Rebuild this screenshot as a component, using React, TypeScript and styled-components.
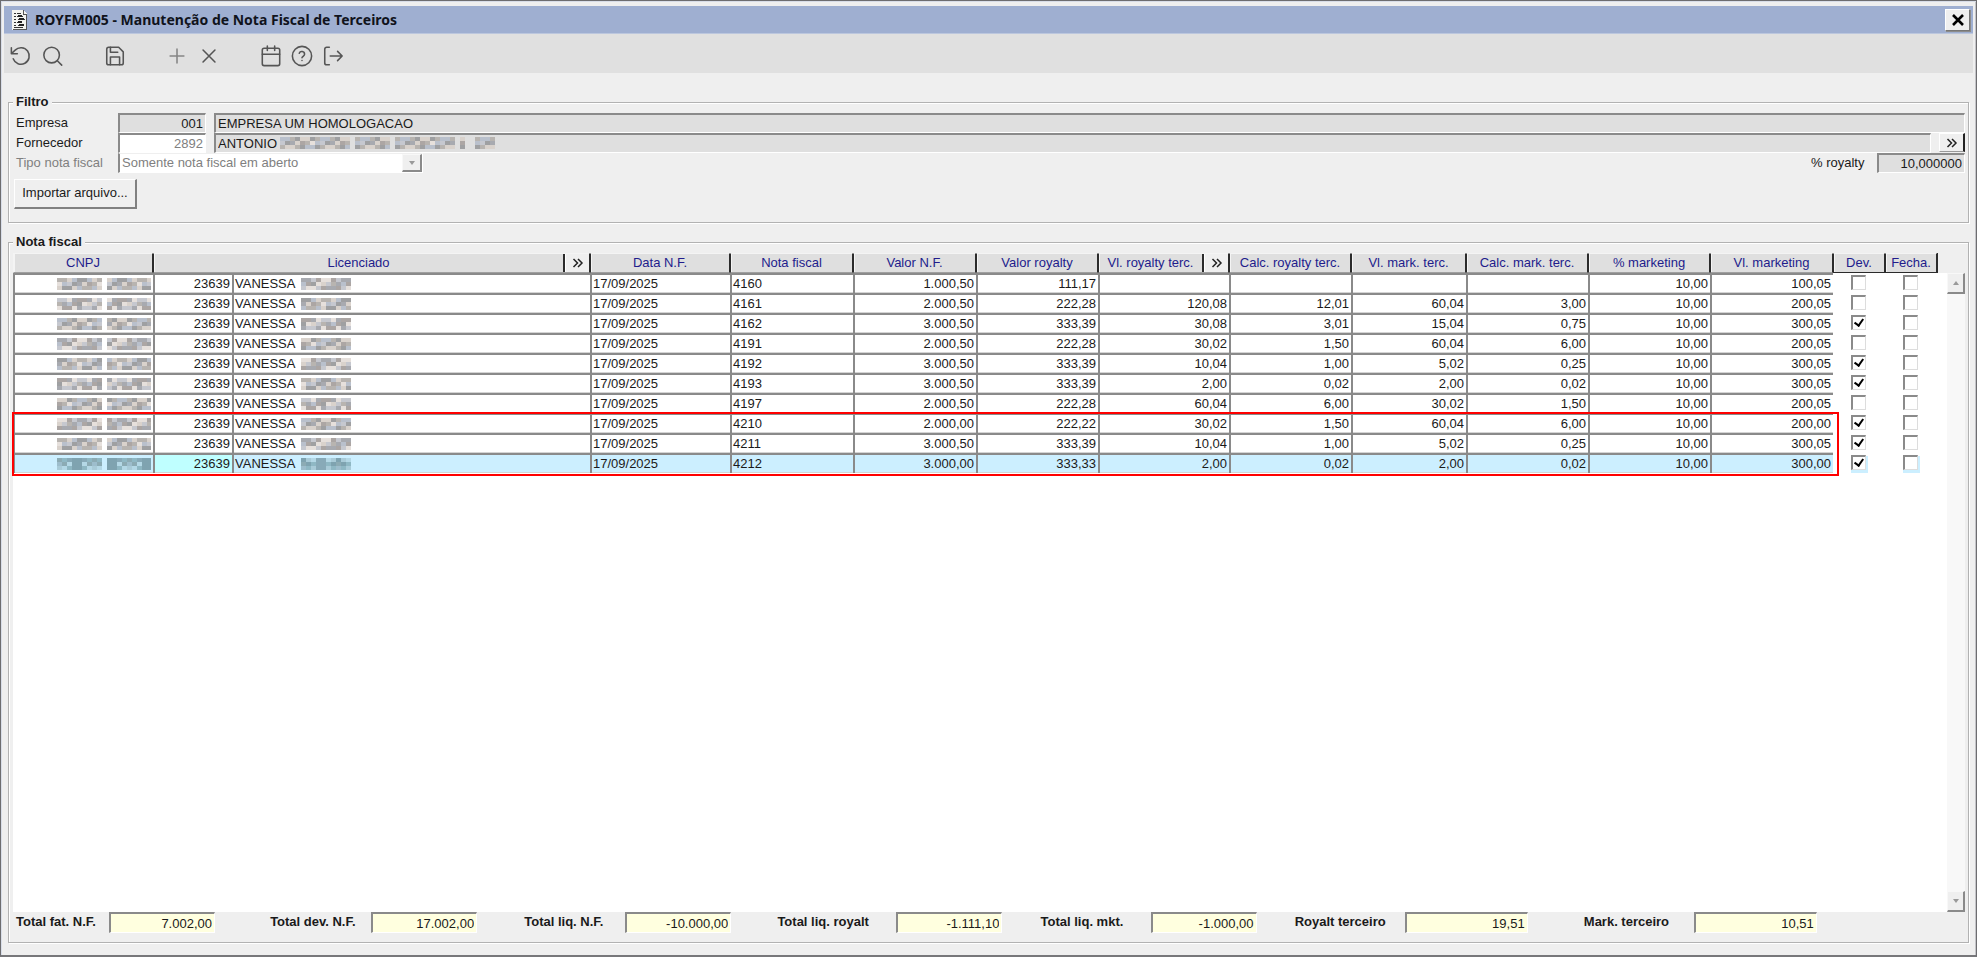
import React from "react";
import styled, { createGlobalStyle } from "styled-components";

const GlobalStyle = createGlobalStyle`
  * { box-sizing: border-box; }
  body { margin: 0; background: #efefef; font-family: "Liberation Sans", Arial, sans-serif; font-size: 13px; line-height: 16px; color: #1a1a1a; }
  button, input, select { font: inherit; color: inherit; }
  button { padding: 0; cursor: pointer; }
`;

const AppWindow = styled.div`
  min-height: 100vh; display: flex; flex-direction: column; background: #efefef;
  border: 1px solid #6d6d70; border-bottom: 2px solid #77777a; padding: 1px 3px 0 3px;
  box-shadow: inset 1px 1px 0 #d8dde8, inset -1px 0 0 #c4c4c8;
`;
const TitleBar = styled.header`
  display: flex; align-items: center; height: 28px; margin-top: 4px; padding: 0 3px 0 8px;
  background: #9fafd1; border-bottom: 1px solid #bcc7de;
`;
const Title = styled.h1`
  flex: 1; margin: 0 0 0 8px; font: bold 14px/20px "Noto Sans", "Open Sans", sans-serif; color: #10131c;
`;
const CloseButton = styled.button`
  width: 25px; height: 22px; display: grid; place-items: center; background: #efefef;
  border: 1px solid; border-color: #fff #777 #777 #fff; box-shadow: 1px 1px 0 #8c8c8c;
`;
const Toolbar = styled.nav`
  display: flex; align-items: center; height: 39px; padding: 4px 5px 0; background: #e0e0e0;
`;
const ToolGroup = styled.div<{ $gap: number }>`
  display: flex; gap: ${(p) => p.$gap}px; margin-right: 38px;
`;
const ToolButton = styled.button<{ $faint?: boolean }>`
  width: 24px; height: 24px; display: grid; place-items: center; border: 0; background: none;
  color: ${(p) => (p.$faint ? "#858585" : "#555")};
`;
const Content = styled.main`
  flex: 1; display: flex; flex-direction: column; gap: 19px; padding: 29px 4px 12px;
`;
const Group = styled.section<{ $grow?: boolean }>`
  display: flex; flex-direction: column; min-width: 0; padding: 0 3px 9px;
  border: 1px solid #b2b2b2; box-shadow: 1px 1px 0 #fff, inset 1px 1px 0 #fff; flex: ${(p) => (p.$grow ? 1 : "none")};
`;
const Legend = styled.h2`
  align-self: flex-start; margin: -10px 0 2px 1px; padding: 0 3px; background: #efefef;
  font-size: 13px; font-weight: bold; line-height: 18px;
`;

const FilterRow = styled.div`display: flex; height: 20px; padding-left: 4px;`;
const FieldLabel = styled.label<{ $dim?: boolean; $width?: number }>`
  width: ${(p) => p.$width || 102}px; line-height: 20px; white-space: nowrap; color: ${(p) => (p.$dim ? "#808080" : "inherit")};
`;
const Field = styled.input<{ $width?: number; $white?: boolean; $align?: string }>`
  width: ${(p) => (p.$width ? p.$width + "px" : "auto")}; flex: ${(p) => (p.$width ? "none" : "1")};
  min-width: 0; height: 20px; padding: 0 2px; text-align: ${(p) => p.$align || "left"}; border-radius: 0;
  background: ${(p) => (p.$white ? "#fff" : "#dfdfdf")}; color: ${(p) => (p.$white ? "#808080" : "#1a1a1a")};
  border: solid; border-width: 2px 1px 1px 2px; border-color: #8a8a8a #fff #fff #8a8a8a; outline: 0;
`;
const Spacer = styled.span<{ $width?: number }>`
  flex: ${(p) => (p.$width ? "none" : "1")}; width: ${(p) => p.$width || 0}px;
`;
const MaskedField = styled.div`
  flex: 1; position: relative; display: flex;
  svg { position: absolute; left: 66px; top: 4px; }
`;
const MoreButton = styled.button`
  width: 26px; height: 19px; display: grid; place-items: center; background: #efefef;
  border: solid; border-width: 1px 2px 1px 1px; border-color: #fff #222 #999 #fff;
`;
const SelectWrap = styled.div`position: relative; width: 305px; height: 20px;`;
const Select = styled.select`
  appearance: none; width: 100%; height: 20px; padding: 0 2px; border: solid; border-radius: 0;
  border-width: 1px 1px 1px 2px; border-color: #efefef #fff #fff #8a8a8a; background: #fff; color: #808080; opacity: 1;
`;
const Arrow = styled.span<{ $up?: boolean }>`
  width: 20px; height: 18px; display: grid; place-items: center; background: #efefef;
  border: solid; border-width: 1px 2px 2px 1px; border-color: #f8f8f8 #8a8a8a #8a8a8a #f8f8f8;
  &::after { content: ""; border: 3px solid transparent; border-top: 4px solid #999; border-bottom: 0;
    transform: ${(p) => (p.$up ? "rotate(180deg)" : "none")}; }
`;
const SelectArrow = styled(Arrow)`position: absolute; right: 1px; top: 1px; pointer-events: none;`;
const ImportButton = styled.button`
  align-self: flex-start; width: 123px; height: 30px; margin: 6px 0 4px 2px; padding-bottom: 2px; background: #efefef;
  border: solid; border-width: 1px 2px 2px 1px; border-color: #fff #808080 #808080 #fff;
`;

const GridArea = styled.div`flex: 1; display: flex; margin: 0 0 0 1px; background: #fff;`;
const TableBox = styled.div`flex: 1; min-width: 0; position: relative;`;
const Table = styled.table`width: 100%; table-layout: fixed; border-collapse: separate; border-spacing: 0;`;
const Th = styled.th<{ $raised?: boolean }>`
  height: 20px; padding: 0; background: #dfdfdf; color: #221c8c; font-weight: normal; white-space: nowrap; line-height: 18px;
  border: solid; border-width: 1px; box-shadow: inset 1px 0 0 #f4f4f4;
  border-color: #f4f4f4 #2b2b2b ${(p) => (p.$raised ? "#2b2b2b" : "#a0a0a0")} #2b2b2b;
  &:first-child { border-left-color: #f4f4f4; }
`;
const ThSplit = styled.div`
  display: flex; align-items: stretch; height: 18px;
  span { flex: 1; border-right: 2px solid #2b2b2b; }
  button { width: 24px; height: 18px; display: grid; place-items: center; border: 0; border-left: 1px solid #fff; background: #efefef; }
`;
const FillTh = styled.th`padding: 0; background: #efefef; border-left: 1px solid #2b2b2b;`;
const Td = styled.td<{ $right?: boolean; $tone?: string }>`
  height: 20px; padding: 0 2px 0 1px; white-space: nowrap; overflow: hidden; line-height: 16px; vertical-align: middle;
  text-align: ${(p) => (p.$right ? "right" : "left")}; background: ${(p) => p.$tone || "#fff"};
  border: solid #8a8a8a; border-width: 2px 0 0 2px; box-shadow: inset 0 -1px 0 #d4d4d4;
  svg { vertical-align: -2px; }
`;
const CheckTd = styled.td`height: 20px; padding: 2px 1px 0 0; text-align: center; line-height: 0; vertical-align: top;`;
const Check = styled.input<{ $tone?: string }>`
  appearance: none; margin: 0; width: 15px; height: 15px; background: #fff; position: relative;
  border: solid; border-width: 2px 1px 1px 2px; border-color: #8a8a8a #ddd #ddd #8a8a8a;
  box-shadow: 1px 2px 0 1px ${(p) => p.$tone || "#fff"};
  &:checked::after { content: ""; position: absolute; left: 3px; top: 0; width: 4px; height: 7px;
    border: solid #000; border-width: 0 2px 2px 0; transform: rotate(35deg); }
`;
const Highlight = styled.div`
  position: absolute; left: -1px; right: 108px; top: 159px; height: 64px; border: 2px solid #f00; pointer-events: none;
`;
const NameText = styled.span`margin-right: 6px;`;
const Scrollbar = styled.div`
  width: 18px; border-top: 20px solid #efefef; display: flex; flex-direction: column; justify-content: space-between; background: #f8f8f8;
`;
const ScrollButton = styled.button`
  padding: 0; border: 0; background: none; display: block; height: 21px;
  ${Arrow} { width: 18px; height: 21px; }
`;
const Totals = styled.div`
  display: grid; grid-template-columns: 254fr 254fr 253fr 263fr 254fr 289fr 381fr; padding-left: 4px;
`;
const Total = styled.div`display: flex;`;
const TotalLabel = styled.label<{ $width: number }>`width: ${(p) => p.$width}px; font-weight: bold; line-height: 20px; white-space: nowrap;`;
const TotalField = styled(Field)`height: 21px; background: #ffffdf;`;

const palette = ["#b8b4b0", "#a8aab0", "#d9d2cc", "#c6c8cf", "#9fa0a2", "#e6e0dc", "#b9c0cc", "#aca6a4"];
const tinted = ["#8fb8c4", "#7fa3b0", "#a9cbd8", "#88aab8", "#9dbdcc", "#b4d8e6", "#8cabb4"];

function Mosaic({ width, seed = 0, blue = false, gaps = [] as number[] }) {
  const tones = blue ? tinted : palette;
  const cells: React.ReactElement[] = [];
  for (let c = 0; c * 5 < width; c++) {
    if (gaps.includes(c)) continue;
    for (let r = 0; r < 3; r++) {
      const i = (c * 7 + r * 5 + c * c * (r + 1) + seed * 3) % tones.length;
      cells.push(<rect key={c + "-" + r} x={c * 5} y={r * 4} width={5} height={4} fill={tones[i]} />);
    }
  }
  return <svg width={width} height={12} aria-hidden="true" shapeRendering="crispEdges">{cells}</svg>;
}

const Chevrons = () => (
  <svg width="12" height="10" viewBox="0 0 12 10" fill="none" stroke="#222" strokeWidth="1.5"><path d="M1.5 1l4 4-4 4M6 1l4 4-4 4" /></svg>
);

const icons: Record<string, React.ReactElement> = {
  undo: <path d="M1.500 3v6.500H8M3.500 15a9 9 0 1 0 2.100-9.400L1.500 9.500" />,
  search: <><circle cx="10.500" cy="11" r="8.500" /><path d="m17 17.500 4.500 4.500" /></>,
  save: <><path d="M19 21.500H5a2 2 0 0 1-2-2V4.500a2 2 0 0 1 2-2h11l5 5v12a2 2 0 0 1-2 2z" /><path d="M17 21.500V13H7v8.500M7 2.500V8h8" /></>,
  plus: <path d="M12 4.500v15M4.500 12h15" />,
  remove: <path d="m5.500 5.500 13 13M18.500 5.500l-13 13" />,
  calendar: <><rect x="2.500" y="3.500" width="19" height="19" rx="2" /><path d="M2.500 10h19M8 1v5M16 1v5" /></>,
  help: <><circle cx="12" cy="12" r="10.500" /><path d="M9 9a3 3 0 0 1 5.800 1c0 2-2.800 2.500-2.800 4M12 17h.01" /></>,
  exit: <><path d="M8 2.500H5a2 2 0 0 0-2 2v15a2 2 0 0 0 2 2h3M9 12h13M17 7l5 5-5 5" /></>,
};
const toolGroups: { gap: number; items: [string, string][] }[] = [
  { gap: 8, items: [["undo", "Desfazer"], ["search", "Pesquisar"]] },
  { gap: 0, items: [["save", "Salvar"]] },
  { gap: 8, items: [["plus", "Incluir"], ["remove", "Excluir"]] },
  { gap: 7, items: [["calendar", "Calendário"], ["help", "Ajuda"], ["exit", "Sair"]] },
];

const rows = [
  ["4160", "1.000,50", "111,17", "", "", "", "", "10,00", "100,05"],
  ["4161", "2.000,50", "222,28", "120,08", "12,01", "60,04", "3,00", "10,00", "200,05"],
  ["4162", "3.000,50", "333,39", "30,08", "3,01", "15,04", "0,75", "10,00", "300,05"],
  ["4191", "2.000,50", "222,28", "30,02", "1,50", "60,04", "6,00", "10,00", "200,05"],
  ["4192", "3.000,50", "333,39", "10,04", "1,00", "5,02", "0,25", "10,00", "300,05"],
  ["4193", "3.000,50", "333,39", "2,00", "0,02", "2,00", "0,02", "10,00", "300,05"],
  ["4197", "2.000,50", "222,28", "60,04", "6,00", "30,02", "1,50", "10,00", "200,05"],
  ["4210", "2.000,00", "222,22", "30,02", "1,50", "60,04", "6,00", "10,00", "200,00"],
  ["4211", "3.000,50", "333,39", "10,04", "1,00", "5,02", "0,25", "10,00", "300,05"],
  ["4212", "3.000,00", "333,33", "2,00", "0,02", "2,00", "0,02", "10,00", "300,00"],
];
const returned = ["4162", "4192", "4193", "4210", "4211", "4212"];
const columnWidths = [140, 79, 0, 140, 123, 123, 122, 131, 122, 115, 122, 122, 123, 52, 52, 10];

const totals: [string, string, number, number][] = [
  ["Total fat. N.F.", "7.002,00", 93, 106],
  ["Total dev. N.F.", "17.002,00", 101, 106],
  ["Total liq. N.F.", "-10.000,00", 101, 106],
  ["Total liq. royalt", "-1.111,10", 119, 106],
  ["Total liq. mkt.", "-1.000,00", 110, 106],
  ["Royalt terceiro", "19,51", 110, 123],
  ["Mark. terceiro", "10,51", 110, 123],
];

export default function App() {
  return (
    <AppWindow>
      <GlobalStyle />
      <TitleBar>
        <svg width="15" height="20" viewBox="0 0 15 20" shapeRendering="crispEdges">
          <path d="M0 0h11l4 4v16H0z" fill="#f4f4f0" /><path d="M11 0v4h4M14 4v15H1" fill="none" stroke="#555" />
          <path d="M2 3h2M5 3h4M2 6h2M5 6h6M2 9h2M6 9h7M2 12h2M5 12h5M2 15h2M6 15h6M2 17h9" stroke="#333" strokeWidth="1" />
          <path d="M6 6h4M7 9h5M6 12h4M7 15h5" stroke="#222" strokeWidth="2" />
        </svg>
        <Title>ROYFM005 - Manutenção de Nota Fiscal de Terceiros</Title>
        <CloseButton aria-label="Fechar">
          <svg width="12" height="12" viewBox="0 0 12 12" stroke="#000" strokeWidth="2.600"><path d="m1 1 10 10M11 1 1 11" /></svg>
        </CloseButton>
      </TitleBar>
      <Toolbar>
        {toolGroups.map((g, i) => (
          <ToolGroup key={i} $gap={g.gap}>
            {g.items.map(([name, label]) => (
              <ToolButton key={name} aria-label={label} $faint={name === "plus"}>
                <svg width="22" height="22" viewBox="0 0 24 24" fill="none" stroke="currentColor" strokeWidth="1.700" strokeLinecap="round" strokeLinejoin="round">{icons[name]}</svg>
              </ToolButton>
            ))}
          </ToolGroup>
        ))}
      </Toolbar>
      <Content>
        <Group aria-labelledby="filtro">
          <Legend id="filtro">Filtro</Legend>
          <FilterRow>
            <FieldLabel htmlFor="empresa">Empresa</FieldLabel>
            <Field id="empresa" $width={88} $align="right" defaultValue="001" readOnly />
            <Spacer $width={8} />
            <Field aria-label="Nome da empresa" defaultValue="EMPRESA UM HOMOLOGACAO" readOnly />
          </FilterRow>
          <FilterRow>
            <FieldLabel htmlFor="fornecedor">Fornecedor</FieldLabel>
            <Field id="fornecedor" $width={88} $white $align="right" defaultValue="2892" />
            <Spacer $width={8} />
            <MaskedField>
              <Field aria-label="Nome do fornecedor" defaultValue="ANTONIO" readOnly />
              <Mosaic width={215} seed={2} gaps={[14, 22, 35, 37, 38]} />
            </MaskedField>
            <Spacer $width={8} />
            <MoreButton aria-label="Mais fornecedores"><Chevrons /></MoreButton>
          </FilterRow>
          <FilterRow>
            <FieldLabel htmlFor="tipo" $dim>Tipo nota fiscal</FieldLabel>
            <SelectWrap>
              <Select id="tipo" disabled><option>Somente nota fiscal em aberto</option></Select>
              <SelectArrow />
            </SelectWrap>
            <Spacer />
            <FieldLabel htmlFor="royalty" $width={66}>% royalty</FieldLabel>
            <Field id="royalty" $width={88} $align="right" defaultValue="10,000000" readOnly />
          </FilterRow>
          <ImportButton>Importar arquivo...</ImportButton>
        </Group>
        <Group $grow aria-labelledby="nota">
          <Legend id="nota">Nota fiscal</Legend>
          <GridArea>
            <TableBox>
              <Table>
                <colgroup>{columnWidths.map((w, i) => <col key={i} width={w || undefined} />)}</colgroup>
                <thead>
                  <tr>
                    <Th>CNPJ</Th>
                    <Th colSpan={2}><ThSplit><span>Licenciado</span><button aria-label="Mais licenciados"><Chevrons /></button></ThSplit></Th>
                    <Th>Data N.F.</Th><Th>Nota fiscal</Th><Th>Valor N.F.</Th><Th>Valor royalty</Th>
                    <Th><ThSplit><span>Vl. royalty terc.</span><button aria-label="Mais royalties"><Chevrons /></button></ThSplit></Th>
                    <Th>Calc. royalty terc.</Th><Th>Vl. mark. terc.</Th><Th>Calc. mark. terc.</Th>
                    <Th>% marketing</Th><Th>Vl. marketing</Th><Th $raised>Dev.</Th><Th $raised>Fecha.</Th><FillTh />
                  </tr>
                </thead>
                <tbody>
                  {rows.map((row, r) => {
                    const tone = r === 9 ? "#ccefff" : undefined;
                    return (
                      <tr key={row[0]}>
                        <Td $right $tone={tone}><Mosaic width={94} seed={r} blue={r === 9} gaps={[9]} /></Td>
                        <Td $right $tone={r === 9 ? "#bfffff" : undefined}>23639</Td>
                        <Td $tone={tone}><NameText>VANESSA</NameText><Mosaic width={50} seed={r + 3} blue={r === 9} /></Td>
                        <Td $tone={tone}>17/09/2025</Td>
                        {row.map((v, c) => <Td key={c} $right={c > 0} $tone={tone}>{v}</Td>)}
                        <CheckTd><Check type="checkbox" aria-label={"Dev. " + row[0]} defaultChecked={returned.includes(row[0])} $tone={tone} /></CheckTd>
                        <CheckTd><Check type="checkbox" aria-label={"Fecha. " + row[0]} $tone={tone} /></CheckTd>
                        <td />
                      </tr>
                    );
                  })}
                </tbody>
              </Table>
              <Highlight />
            </TableBox>
            <Scrollbar>
              <ScrollButton aria-label="Rolar para cima"><Arrow $up /></ScrollButton>
              <ScrollButton aria-label="Rolar para baixo"><Arrow /></ScrollButton>
            </Scrollbar>
          </GridArea>
          <Totals>
            {totals.map(([label, value, lw, fw], i) => (
              <Total key={label}>
                <TotalLabel htmlFor={"total" + i} $width={lw}>{label}</TotalLabel>
                <TotalField id={"total" + i} $width={fw} $align="right" defaultValue={value} readOnly />
              </Total>
            ))}
          </Totals>
        </Group>
      </Content>
    </AppWindow>
  );
}
